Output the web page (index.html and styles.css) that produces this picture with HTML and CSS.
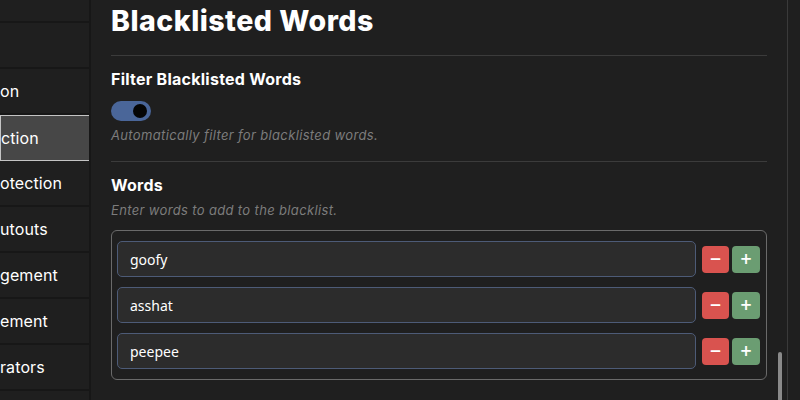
FILE: index.html
```html
<!DOCTYPE html>
<html>
<head>
<meta charset="utf-8">
<link rel="stylesheet" href="styles.css">
</head>
<body>
<div class="app">
  <nav class="sidebar">
    <div class="nav-item top"></div>
    <div class="nav-item blank"></div>
    <div class="nav-item">on</div>
    <div class="nav-item active">ction</div>
    <div class="nav-item">otection</div>
    <div class="nav-item">utouts</div>
    <div class="nav-item">gement</div>
    <div class="nav-item">ement</div>
    <div class="nav-item">rators</div>
  </nav>
  <main class="content">
    <h1 class="title">Blacklisted Words</h1>
    <hr class="sep">
    <section class="setting">
      <h2 class="setting-title">Filter Blacklisted Words</h2>
      <div class="toggle"><span class="knob"></span></div>
      <p class="desc">Automatically filter for blacklisted words.</p>
    </section>
    <hr class="sep">
    <section class="setting">
      <h2 class="setting-title">Words</h2>
      <p class="desc">Enter words to add to the blacklist.</p>
      <div class="word-box">
        <div class="word-row">
          <input class="word-input" value="goofy">
          <button class="btn minus">−</button>
          <button class="btn plus">+</button>
        </div>
        <div class="word-row">
          <input class="word-input" value="asshat">
          <button class="btn minus">−</button>
          <button class="btn plus">+</button>
        </div>
        <div class="word-row">
          <input class="word-input" value="peepee">
          <button class="btn minus">−</button>
          <button class="btn plus">+</button>
        </div>
      </div>
    </section>
    <div class="scroll-thumb"></div>
  </main>
  <div class="edge"></div>
</div>
</body>
</html>
```
FILE: styles.css
```css
* { box-sizing: border-box; }
html, body { margin: 0; padding: 0; }
body {
  background: #1f1f1f;
  width: 800px;
  height: 400px;
  overflow: hidden;
  font-family: "Inter", "Open Sans", sans-serif;
  color: #ffffff;
}
.app {
  display: flex;
  height: 400px;
}
.sidebar {
  width: 91px;
  flex: none;
  border-right: 2px solid #171717;
  overflow: hidden;
  display: flex;
  flex-direction: column;
}
.nav-item {
  height: 46px;
  flex: none;
  border-bottom: 2px solid #171717;
  display: flex;
  align-items: center;
  font-size: 16px;
  white-space: nowrap;
  letter-spacing: 0.1px;
}
.nav-item.top { height: 23px; }
.nav-item.blank { height: 46px; }
.nav-item.active {
  background: #474747;
  border: 1px solid #c4c4c4;
  margin-right: -2px;
  height: 46px;
}
.content {
  position: relative;
  width: 697px;
  flex: none;
  padding: 0 20px 0 20px;
  border-right: 1px solid #3a3a3a;
}
.edge { flex: 1; }
.title {
  margin: 0;
  padding-top: 2px;
  font-size: 28.5px;
  font-weight: 800;
  line-height: 38px;
  letter-spacing: 0.5px;
}
.sep {
  border: none;
  border-top: 1px solid #3b3b3b;
  margin: 15px 0 0 0;
  height: 0;
}
.setting { padding-top: 12px; }
.setting-title {
  margin: 0;
  font-size: 16px;
  font-weight: 700;
  line-height: 22px;
  letter-spacing: 0.25px;
}
.toggle {
  margin-top: 11px;
  width: 40px;
  height: 20px;
  border-radius: 10px;
  background: #4a6699;
  position: relative;
}
.knob {
  position: absolute;
  right: 4px;
  top: 3px;
  width: 14px;
  height: 14px;
  border-radius: 50%;
  background: #050505;
}
.desc {
  margin: 4px 0 0 0;
  font-size: 13px;
  font-style: italic;
  color: #7c7c7c;
  line-height: 20px;
  letter-spacing: 0.35px;
}
.setting + .sep { margin-top: 16px; }
.word-box {
  margin-top: 10px;
  border: 1px solid #6a6a6a;
  border-radius: 6px;
  padding: 10px 6px 10px 5px;
  display: flex;
  flex-direction: column;
  gap: 10px;
}
.word-row {
  display: flex;
  align-items: center;
  gap: 3px;
}
.word-input {
  flex: 1;
  height: 36px;
  background: #2c2c2c;
  border: 1px solid #4d5b77;
  border-radius: 5px;
  color: #ffffff;
  font-family: "Noto Sans", "Open Sans", sans-serif;
  font-size: 14px;
  padding: 0 12px;
  margin-right: 3px;
  outline: none;
}
.btn {
  width: 27px;
  height: 27px;
  border: none;
  border-radius: 4px;
  color: #ffffff;
  font-family: "DejaVu Sans", sans-serif;
  font-size: 15px;
  font-weight: 700;
  padding: 0;
  line-height: 27px;
}
.btn.plus { width: 28px; }
.minus { background: #d9534f; }
.plus { background: #6b9d72; }
.scroll-thumb {
  position: absolute;
  right: 5px;
  top: 352px;
  width: 4px;
  height: 60px;
  border-radius: 2px;
  background: #8a8a8a;
}
```
